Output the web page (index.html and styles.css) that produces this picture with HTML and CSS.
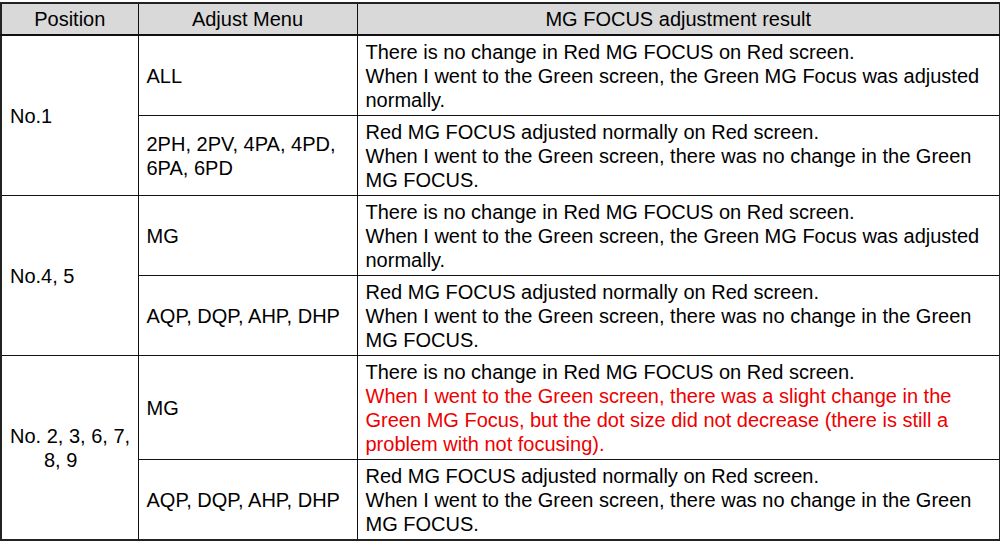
FILE: index.html
```html
<!DOCTYPE html>
<html>
<head>
<meta charset="utf-8">
<link rel="stylesheet" href="styles.css">
</head>
<body>
<table class="grid">
  <colgroup>
    <col class="c-pos">
    <col class="c-menu">
    <col class="c-res">
  </colgroup>
  <thead>
    <tr>
      <th>Position</th>
      <th>Adjust Menu</th>
      <th>MG FOCUS adjustment result</th>
    </tr>
  </thead>
  <tbody>
    <tr>
      <td class="pos" rowspan="2">No.1</td>
      <td class="menu">ALL</td>
      <td class="res">There is no change in Red MG FOCUS on Red screen.<br>When I went to the Green screen, the Green MG Focus was adjusted normally.</td>
    </tr>
    <tr>
      <td class="menu">2PH, 2PV, 4PA, 4PD,<br>6PA, 6PD</td>
      <td class="res">Red MG FOCUS adjusted normally on Red screen.<br>When I went to the Green screen, there was no change in the Green MG FOCUS.</td>
    </tr>
    <tr>
      <td class="pos" rowspan="2">No.4, 5</td>
      <td class="menu">MG</td>
      <td class="res">There is no change in Red MG FOCUS on Red screen.<br>When I went to the Green screen, the Green MG Focus was adjusted normally.</td>
    </tr>
    <tr>
      <td class="menu">AQP, DQP, AHP, DHP</td>
      <td class="res">Red MG FOCUS adjusted normally on Red screen.<br>When I went to the Green screen, there was no change in the Green MG FOCUS.</td>
    </tr>
    <tr>
      <td class="pos" rowspan="2">No. 2, 3, 6, 7,<br><span class="indent">8, 9</span></td>
      <td class="menu">MG</td>
      <td class="res">There is no change in Red MG FOCUS on Red screen.<br><span class="warn">When I went to the Green screen, there was a slight change in the Green MG Focus, but the dot size did not decrease (there is still a problem with not focusing).</span></td>
    </tr>
    <tr>
      <td class="menu">AQP, DQP, AHP, DHP</td>
      <td class="res">Red MG FOCUS adjusted normally on Red screen.<br>When I went to the Green screen, there was no change in the Green MG FOCUS.</td>
    </tr>
  </tbody>
</table>
</body>
</html>
```

FILE: styles.css
```css
html, body {
  margin: 0;
  padding: 0;
  background: #ffffff;
}
body {
  padding: 2px 0 0 0;
  font-family: "Liberation Sans", Arial, sans-serif;
  font-size: 20px;
  color: #000;
}
.grid {
  border-collapse: collapse;
  width: 999px;
  table-layout: fixed;
  border: 2px solid #222;
}
.c-pos { width: 137px; }
.c-menu { width: 219px; }
.c-res { width: 643px; }
.grid th, .grid td {
  border: 1px solid #111;
  line-height: 24px;
  vertical-align: middle;
}
.grid th {
  background: #d9d9d9;
  font-weight: normal;
  height: 30px;
  padding: 0;
  text-align: center;
  border-bottom-width: 2px;
}
.grid td {
  padding: 4px 8px 3px 8px;
  text-align: left;
}
.grid td.pos {
  padding-right: 0;
  white-space: nowrap;
}
.indent {
  display: inline-block;
  padding-left: 34px;
}
.warn {
  color: #ee0000;
}
```
